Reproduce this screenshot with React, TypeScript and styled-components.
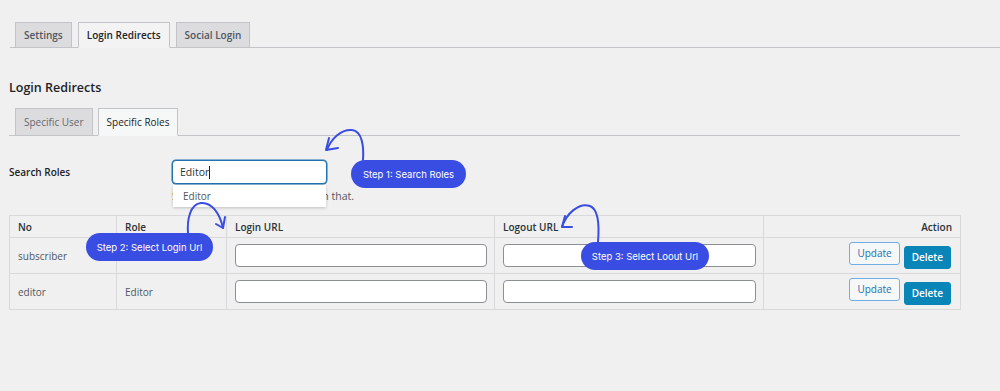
import styled, { createGlobalStyle } from 'styled-components';

const GlobalStyle = createGlobalStyle`
  html, body {
    margin: 0;
    background: #f0f0f1;
  }
  * {
    box-sizing: border-box;
  }
  body {
    font-family: "Open Sans", "Noto Sans", sans-serif;
    color: #2c3338;
  }
`;

const Page = styled.div`
  position: relative;
  width: 1000px;
  height: 391px;
  padding-top: 22px;
  overflow: hidden;
`;

const NavTabs = styled.div`
  display: flex;
  align-items: flex-end;
  gap: 6px;
  margin-left: 10px;
  padding-left: 5px;
  border-bottom: 1px solid #c3c4c7;
`;

const NavTab = styled.div<{ $active?: boolean }>`
  height: 26px;
  margin-bottom: -1px;
  padding: 0 8px;
  display: flex;
  align-items: center;
  font-size: 10px;
  font-weight: 600;
  border: 1px solid #c3c4c7;
  border-bottom-color: ${(p) => (p.$active ? '#f3f3f4' : '#c3c4c7')};
  background: ${(p) => (p.$active ? '#f3f3f4' : '#dcdcde')};
  color: ${(p) => (p.$active ? '#1d2327' : '#50575e')};
`;

const Content = styled.div`
  padding: 0 40px 0 9px;
`;

const Heading = styled.h2`
  margin: 31px 0 0;
  font-size: 12.5px;
  line-height: 18px;
  font-weight: 600;
  color: #1d2327;
`;

const SubTabs = styled.div`
  display: flex;
  align-items: flex-end;
  gap: 5px;
  margin-top: 11px;
  padding-left: 6px;
  border-bottom: 1px solid #c3c4c7;
`;

const SubTab = styled.div<{ $active?: boolean }>`
  height: 28px;
  margin-bottom: -1px;
  padding: 0 8px;
  display: flex;
  align-items: center;
  font-size: 10px;
  border: 1px solid #c3c4c7;
  border-bottom-color: ${(p) => (p.$active ? '#f6f7f7' : '#c3c4c7')};
  background: ${(p) => (p.$active ? '#f6f7f7' : '#dcdcde')};
  color: ${(p) => (p.$active ? '#1d2327' : '#646970')};
`;

const SearchRow = styled.div`
  display: flex;
  align-items: flex-start;
  margin-top: 24px;
`;

const SearchLabel = styled.label`
  width: 163px;
  height: 24px;
  display: flex;
  align-items: center;
  font-size: 10px;
  font-weight: 600;
  color: #1d2327;
`;

const SearchField = styled.div`
  position: relative;
  width: 155px;
`;

const SearchBox = styled.div`
  height: 24px;
  padding: 0 7px;
  display: flex;
  align-items: center;
  font-size: 10.5px;
  color: #2c3338;
  background: #fff;
  border: 1px solid #2271b1;
  border-radius: 4px;
  box-shadow: 0 0 0 0.5px #2271b1;
`;

const Caret = styled.span`
  display: inline-block;
  width: 1px;
  height: 13px;
  background: #1d2327;
`;

const Description = styled.p`
  margin: 5px 0 0;
  font-size: 10.5px;
  line-height: 14px;
  color: #50575e;
  white-space: nowrap;
`;

const Dropdown = styled.div`
  position: absolute;
  top: 25px;
  left: 1px;
  width: 153px;
  height: 22px;
  padding-left: 10px;
  display: flex;
  align-items: center;
  font-size: 10px;
  color: #50575e;
  background: #fff;
  box-shadow: 0 1px 3px rgba(0, 0, 0, 0.2);
`;

const Table = styled.table`
  width: 951px;
  margin-top: 12px;
  border-collapse: collapse;
  table-layout: fixed;
  font-size: 10px;
`;

const Th = styled.th<{ $w: number; $right?: boolean }>`
  width: ${(p) => p.$w}px;
  height: 22px;
  padding: 0 8px;
  text-align: ${(p) => (p.$right ? 'right' : 'left')};
  font-weight: 600;
  color: #2c3338;
  border: 1px solid #d9d9db;
`;

const Td = styled.td<{ $right?: boolean }>`
  height: 36px;
  padding: 0 7px 0 8px;
  color: #50575e;
  text-align: ${(p) => (p.$right ? 'right' : 'left')};
  border: 1px solid #d9d9db;
`;

const UrlInput = styled.input`
  display: block;
  width: 100%;
  height: 23px;
  background: #fff;
  border: 1px solid #8c8f94;
  border-radius: 4px;
  font: inherit;
`;

const Actions = styled.div`
  display: flex;
  justify-content: flex-end;
  align-items: flex-start;
  gap: 4px;
  height: 28px;
  padding-right: 2px;
`;

const Button = styled.button<{ $primary?: boolean }>`
  height: 23px;
  padding: 0 7px;
  margin-top: ${(p) => (p.$primary ? '4px' : '0')};
  font-family: inherit;
  font-size: 10px;
  font-weight: ${(p) => (p.$primary ? 600 : 400)};
  border-radius: 3px;
  border: 1px solid ${(p) => (p.$primary ? '#0a85b8' : '#72aee6')};
  background: ${(p) => (p.$primary ? '#0a85b8' : '#f6f7f7')};
  color: ${(p) => (p.$primary ? '#fff' : '#2271b1')};
`;

const Callout = styled.div<{ $x: number; $y: number; $w: number }>`
  position: absolute;
  left: ${(p) => p.$x}px;
  top: ${(p) => p.$y}px;
  width: ${(p) => p.$w}px;
  height: 28px;
  border-radius: 14px;
  background: #3a4de2;
  color: #fff;
  font-family: Inter, "Noto Sans", sans-serif;
  font-size: 9.5px;
  font-weight: 400;
  display: flex;
  align-items: center;
  justify-content: center;
`;

const Arrows = styled.svg`
  position: absolute;
  inset: 0;
  pointer-events: none;
`;

const rows = [
  { no: 'subscriber', role: '' },
  { no: 'editor', role: 'Editor' },
];

export default function App() {
  return (
    <Page>
      <GlobalStyle />
      <NavTabs>
        <NavTab>Settings</NavTab>
        <NavTab $active>Login Redirects</NavTab>
        <NavTab>Social Login</NavTab>
      </NavTabs>

      <Content>
        <Heading>Login Redirects</Heading>
        <SubTabs>
          <SubTab>Specific User</SubTab>
          <SubTab $active>Specific Roles</SubTab>
        </SubTabs>

        <SearchRow>
          <SearchLabel>Search Roles</SearchLabel>
          <SearchField>
            <SearchBox>
              Editor
              <Caret />
            </SearchBox>
            <Description>Search a role and then select on that.</Description>
            <Dropdown>Editor</Dropdown>
          </SearchField>
        </SearchRow>

        <Table>
          <thead>
            <tr>
              <Th $w={107}>No</Th>
              <Th $w={110}>Role</Th>
              <Th $w={268}>Login URL</Th>
              <Th $w={269}>Logout URL</Th>
              <Th $w={197} $right>
                Action
              </Th>
            </tr>
          </thead>
          <tbody>
            {rows.map((r) => (
              <tr key={r.no}>
                <Td>{r.no}</Td>
                <Td>{r.role}</Td>
                <Td>
                  <UrlInput type="text" />
                </Td>
                <Td>
                  <UrlInput type="text" />
                </Td>
                <Td $right>
                  <Actions>
                    <Button>Update</Button>
                    <Button $primary>Delete</Button>
                  </Actions>
                </Td>
              </tr>
            ))}
          </tbody>
        </Table>
      </Content>

      <Arrows width="1000" height="391" viewBox="0 0 1000 391">
        <g fill="none" stroke="#3a4de2" strokeWidth="2" strokeLinecap="round" strokeLinejoin="round">
          <path d="M363 160 C364 146, 362 131, 352 130 C341 129, 331 139, 327 150" />
          <path d="M329 138 L326 150 L338 148" />
          <path d="M188 233 C187 220, 190 204, 201 203 C212 202, 220 214, 223 228" />
          <path d="M225 217 L223 228 L216 224" />
          <path d="M598 242 C599 230, 600 210, 590 206 C579 202, 566 214, 562 227" />
          <path d="M565 216 L562 227 L572 227" />
        </g>
      </Arrows>

      <Callout $x={351} $y={160} $w={115}>
        Step 1: Search Roles
      </Callout>
      <Callout $x={86} $y={233} $w={127}>
        Step 2: Select Login Url
      </Callout>
      <Callout $x={581} $y={242} $w={128}>
        Step 3: Select Loout Url
      </Callout>
    </Page>
  );
}
